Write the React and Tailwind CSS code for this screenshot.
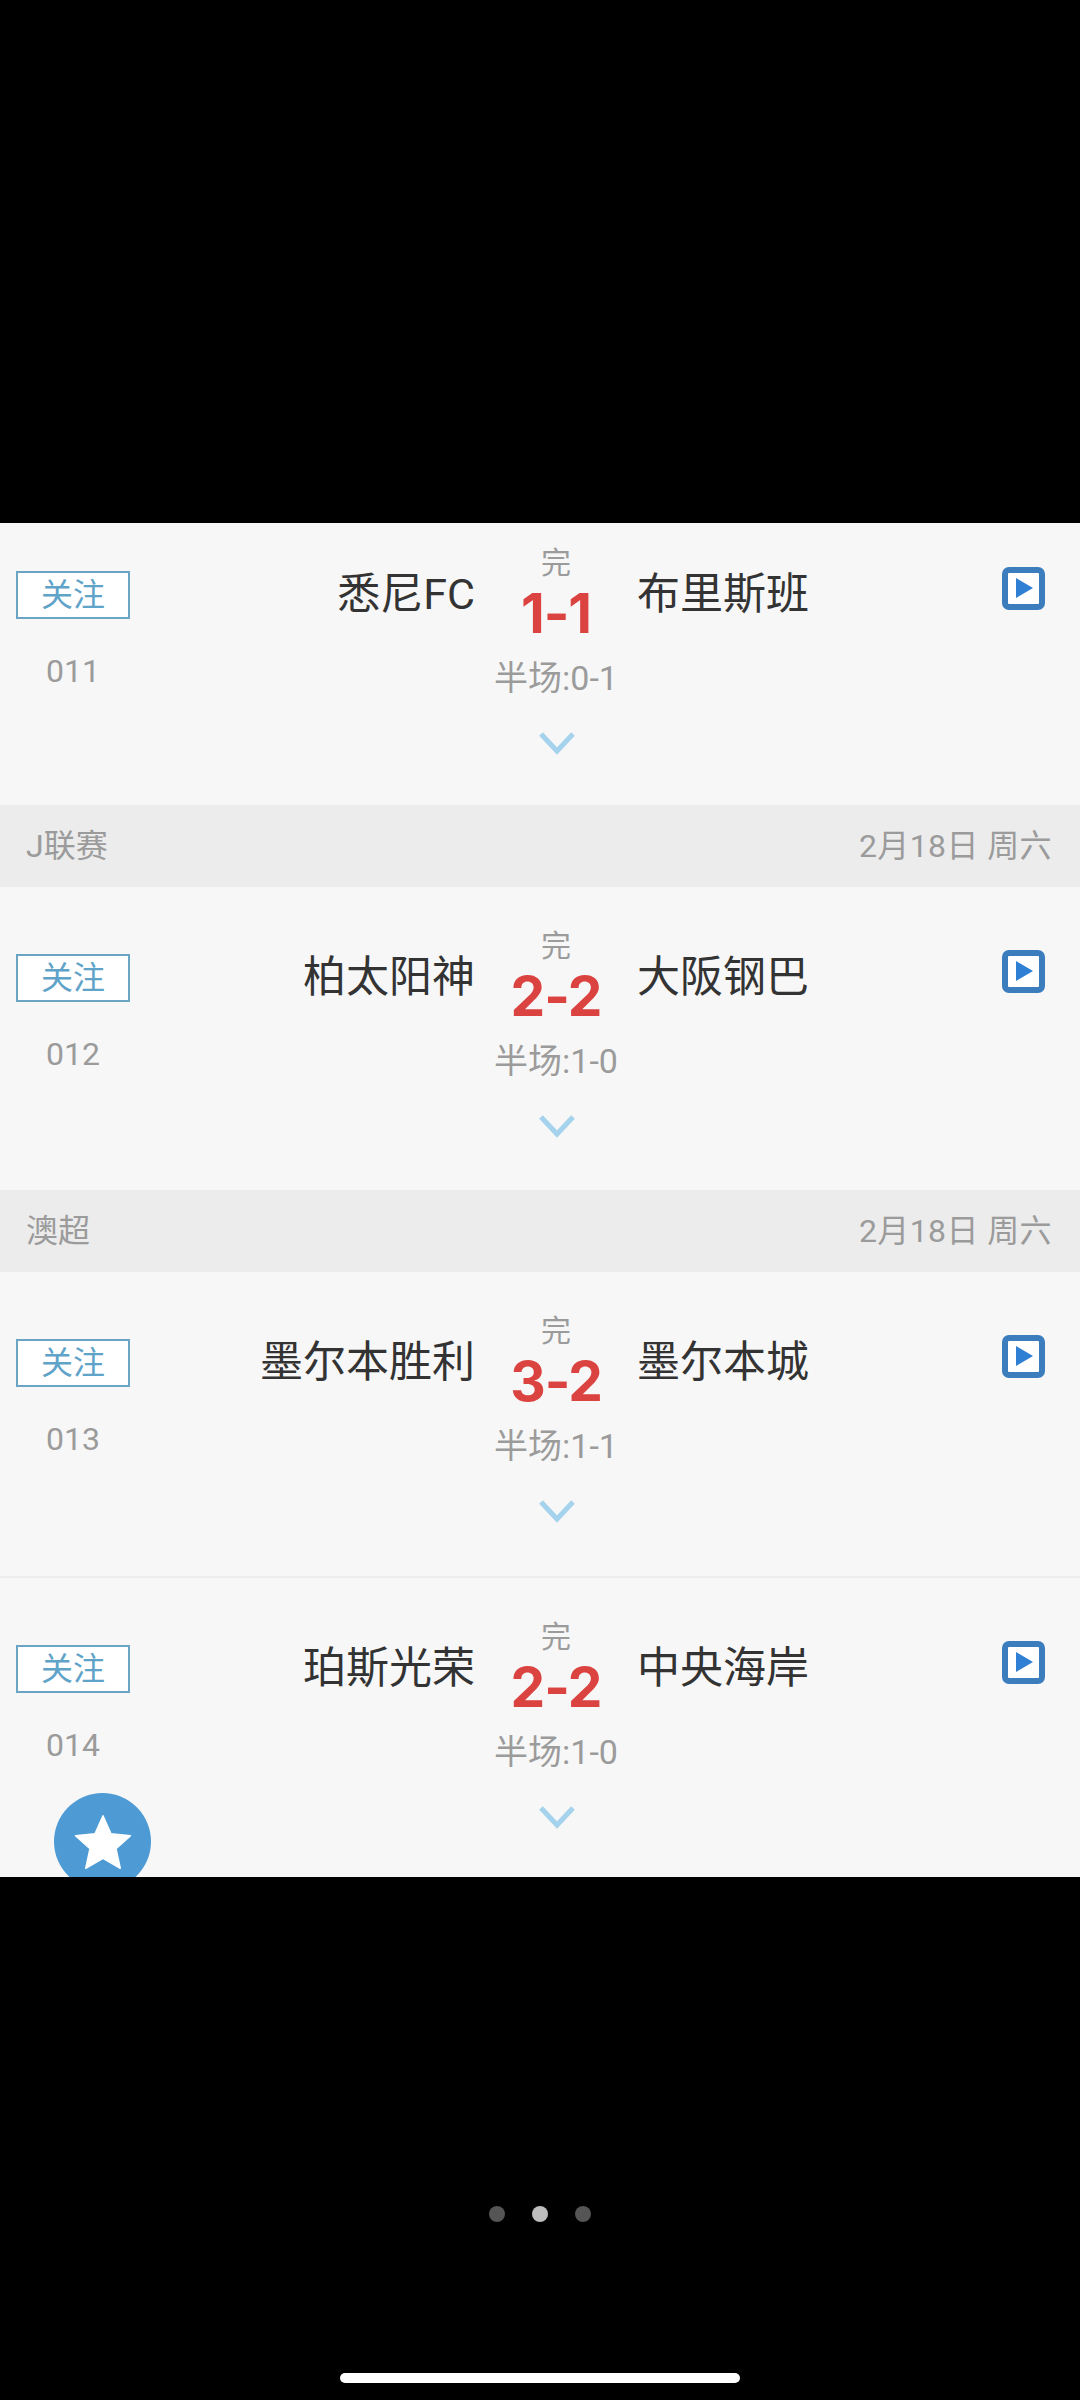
import React from "react";

const FONT = "font-['Roboto','Noto_Sans_CJK_SC',sans-serif]";

const blocks = [
    { type: "match", no: "011", home: "悉尼FC", away: "布里斯班", score: "1-1", half: "半场:0-1", h: "h-[301px]" },
    { type: "league", name: "J联赛", date: "2月18日 周六" },
    { type: "match", no: "012", home: "柏太阳神", away: "大阪钢巴", score: "2-2", half: "半场:1-0", h: "h-[303px]" },
    { type: "league", name: "澳超", date: "2月18日 周六" },
    { type: "match", no: "013", home: "墨尔本胜利", away: "墨尔本城", score: "3-2", half: "半场:1-1", h: "h-[306px]", line: true },
    { type: "match", no: "014", home: "珀斯光荣", away: "中央海岸", score: "2-2", half: "半场:1-0", h: "h-[306px]" },
];

function PlayIcon() {
    return (
        <div className="mt-[63px] flex h-[43px] w-[43px] items-center justify-center rounded-[7px] border-[6px] border-[#3b7dbd] bg-white">
            <svg width="31" height="31" viewBox="0 0 31 31" className="shrink-0">
                <path d="M8 5 L25 15 L8 25 Z" fill="#2f7fd4" />
            </svg>
        </div>
    );
}

function Chevron() {
    return (
        <svg width="36" height="24" viewBox="0 0 36 24" className="mt-[31px] ml-[2px]">
            <path d="M2 3 L18 20 L34 3" fill="none" stroke="#a5d2ec" strokeWidth="5" />
        </svg>
    );
}

function MatchRow({ item }) {
    return (
        <div className={`flex ${item.h} ${item.line ? "border-b-2 border-[#eeeeee]" : ""}`}>
            <div className="flex w-[146px] flex-col items-center">
                <div className="mt-[67px] flex h-[48px] w-[114px] items-center justify-center border-2 border-[#6ba5c6] bg-white text-[32px] leading-none text-[#5fa3c9]">
                    关注
                </div>
                <div className="mt-[30px] text-[32px] leading-[44px] text-[#9b9b9b]">{item.no}</div>
            </div>
            <div className="w-[329px] pt-[60px] text-right text-[43px] leading-[60px] text-[#333333]">{item.home}</div>
            <div className="flex w-[162px] flex-col items-center pt-[39px]">
                <div className="text-[30px] leading-[40px] text-[#9b9b9b]">完</div>
                <div className="mt-[1px] font-['Inter',sans-serif] text-[55px] font-bold leading-[58px] tracking-[-1px] text-[#db4340]">{item.score}</div>
                <div className="mt-[14px] text-[34px] leading-[44px] text-[#9b9b9b]">{item.half}</div>
                <Chevron />
            </div>
            <div className="flex-1 pt-[60px] text-[43px] leading-[60px] text-[#333333]">{item.away}</div>
            <div className="w-[78px]">
                <PlayIcon />
            </div>
        </div>
    );
}

function LeagueRow({ item }) {
    return (
        <div className="flex h-[82px] items-center justify-between bg-[#ececec] pl-[26px] pr-[28px] text-[32px] text-[#9b9b9b]">
            <span>{item.name}</span>
            <span className="tracking-[0.4px]">{item.date}</span>
        </div>
    );
}

export default function App() {
    return (
        <div className={`flex h-[2400px] w-[1080px] flex-col overflow-hidden bg-black ${FONT}`}>
            <div className="h-[523px] shrink-0" />

            <div className="relative h-[1354px] shrink-0 overflow-hidden bg-[#f7f7f7]">
                <div className="-mt-[19px]">
                    {blocks.map((item, index) =>
                        item.type === "league"
                            ? <LeagueRow key={index} item={item} />
                            : <MatchRow key={index} item={item} />
                    )}
                </div>
                <div className="absolute left-[54px] top-[1270px] flex h-[97px] w-[97px] items-center justify-center rounded-full bg-[#4d9ad5]">
                    <svg width="60" height="58" viewBox="0 0 24 23">
                        <path d="M12 1 L15.2 8.2 L23 9 L17.2 14.2 L18.9 22 L12 18 L5.1 22 L6.8 14.2 L1 9 L8.8 8.2 Z" fill="#ffffff" strokeLinejoin="round" stroke="#ffffff" strokeWidth="0.6" />
                    </svg>
                </div>
            </div>

            <div className="flex justify-center gap-[27px] pt-[329px]">
                <div className="h-4 w-4 rounded-full bg-[#555555]" />
                <div className="h-4 w-4 rounded-full bg-[#bdbdbd]" />
                <div className="h-4 w-4 rounded-full bg-[#555555]" />
            </div>
            <div className="mx-auto mt-[151px] h-[10px] w-[400px] rounded-full bg-white" />
        </div>
    );
}
